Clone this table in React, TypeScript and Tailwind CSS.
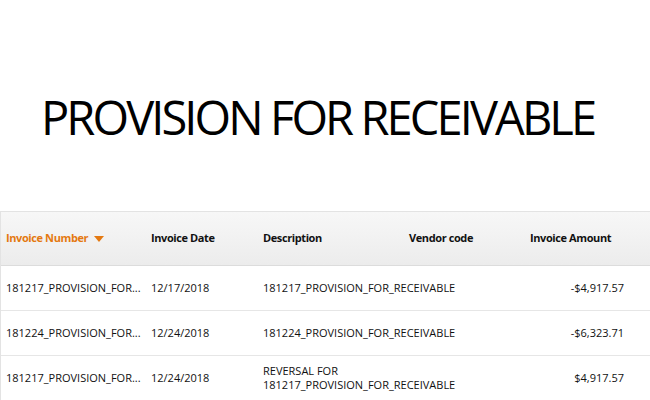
import React from "react";

const rows = [
  {
    number: "181217_PROVISION_FOR...",
    date: "12/17/2018",
    description: "181217_PROVISION_FOR_RECEIVABLE",
    vendor: "",
    amount: "-$4,917.57",
  },
  {
    number: "181224_PROVISION_FOR...",
    date: "12/24/2018",
    description: "181224_PROVISION_FOR_RECEIVABLE",
    vendor: "",
    amount: "-$6,323.71",
  },
  {
    number: "181217_PROVISION_FOR...",
    date: "12/24/2018",
    description: "REVERSAL FOR 181217_PROVISION_FOR_RECEIVABLE",
    vendor: "",
    amount: "$4,917.57",
  },
];

const cols = "grid grid-cols-[145px_112px_146px_121px_99px]";

const App = () => {
  return (
    <div className="w-[650px] h-[400px] overflow-hidden bg-white font-['Open_Sans',sans-serif] text-[#111]">
      <div className="h-[211px] pt-[87px]">
        <h1 className="pl-[41px] whitespace-nowrap text-[47px] leading-[60px] tracking-[-2.9px] text-black font-normal">
          PROVISION FOR RECEIVABLE
        </h1>
      </div>

      <div className="w-[680px] border-l border-t border-[#e3e3e3] text-[11px]">
        <div
          className={`${cols} h-[54px] items-center bg-gradient-to-b from-[#f7f7f7] to-[#ececec] border-b border-[#dcdcdc] font-bold tracking-[-0.4px]`}
        >
          <div className="pl-[5px] flex items-center gap-[6px] text-[#e47911]">
            Invoice Number
            <svg width="10" height="6" viewBox="0 0 10 6">
              <path d="M0 0 L10 0 L5 6 Z" fill="#e47911" />
            </svg>
          </div>
          <div className="pl-[5px]">Invoice Date</div>
          <div className="pl-[5px]">Description</div>
          <div className="pl-[5px]">Vendor code</div>
          <div className="pl-[5px]">Invoice Amount</div>
        </div>

        {rows.map((row, index) => (
          <div
            key={index}
            className={`${cols} h-[45px] items-center border-b border-[#e6e6e6]`}
          >
            <div className="pl-[5px] whitespace-nowrap">{row.number}</div>
            <div className="pl-[5px]">{row.date}</div>
            <div className="pl-[5px] leading-[14px]">{row.description}</div>
            <div className="pl-[5px]">{row.vendor}</div>
            <div className="text-right">{row.amount}</div>
          </div>
        ))}
      </div>
    </div>
  );
};

export default App;
